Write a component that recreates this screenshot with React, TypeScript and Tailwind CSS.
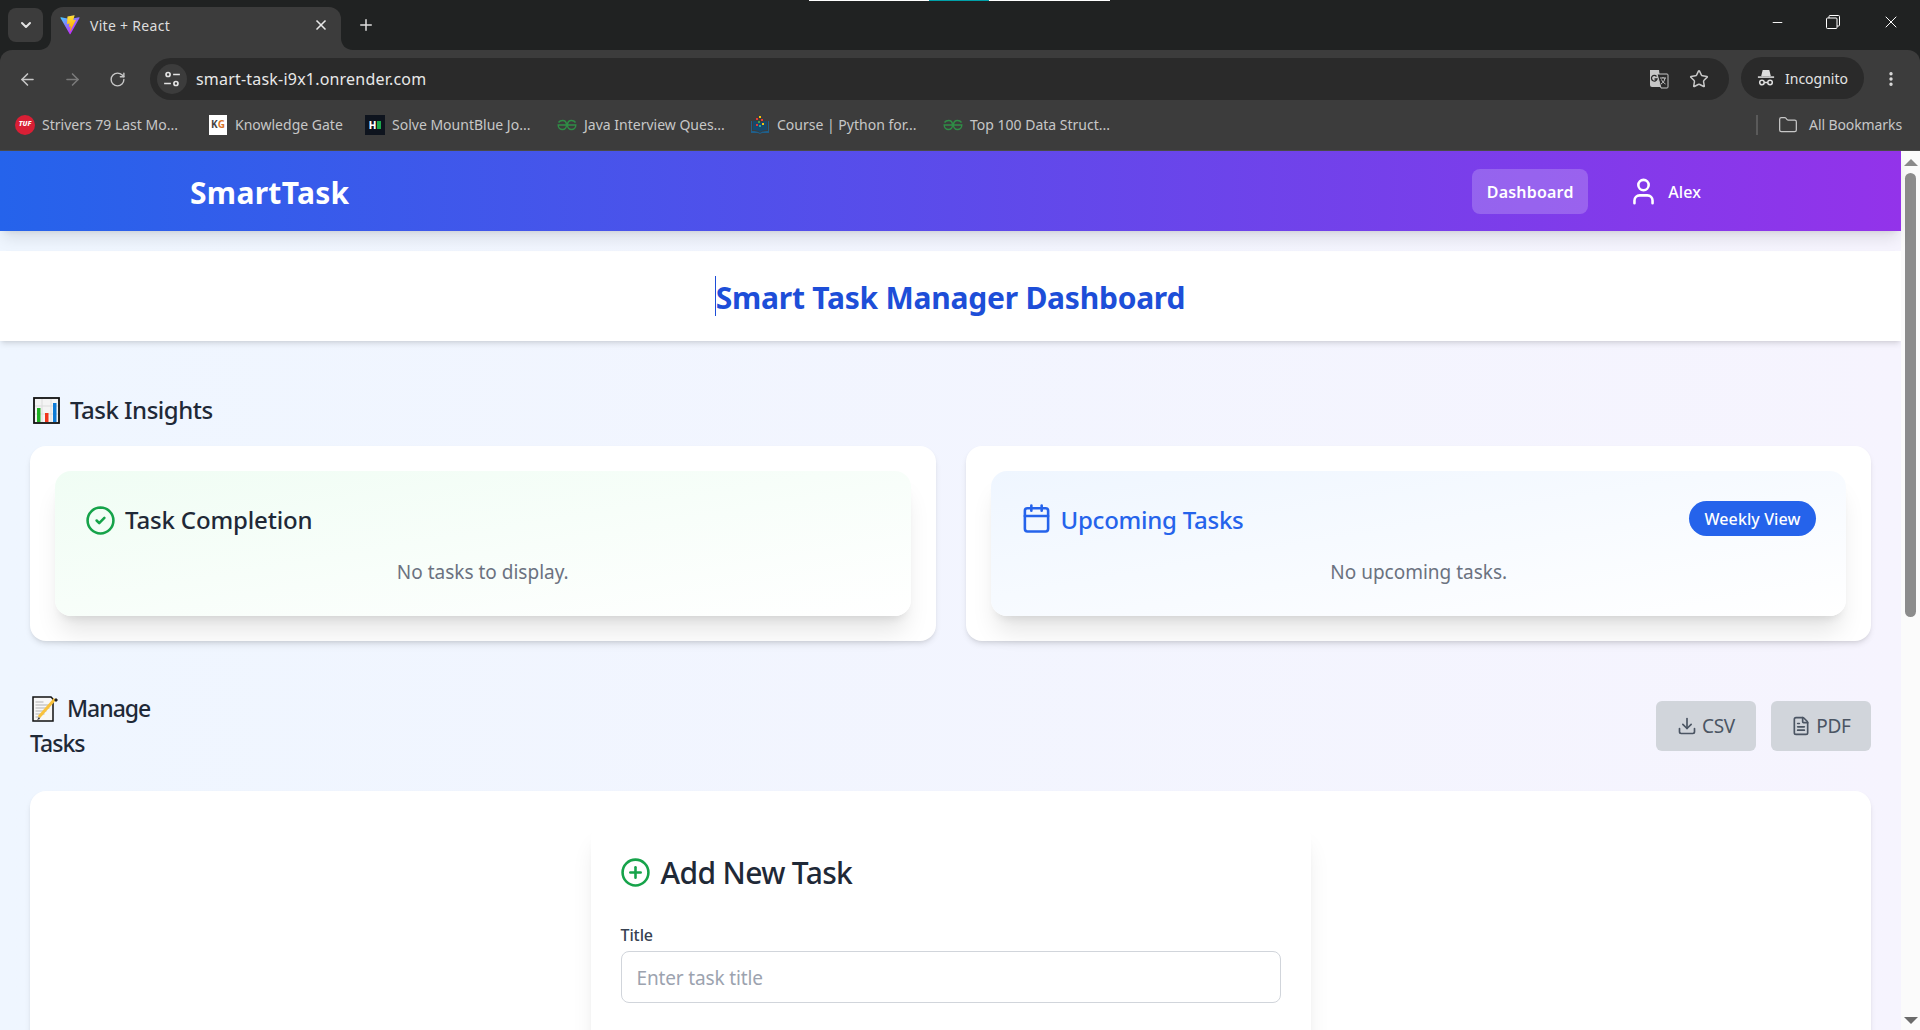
import { ArrowLeft, ArrowRight, Calendar, ChevronDown, CircleCheck, CirclePlus, Download, EllipsisVertical, FileText, Folder, Minus, Plus, RotateCw, Star, User, X } from "lucide-react";

function ViteLogo() {
  return (
    <svg viewBox="0 0 410 404" className="h-5 w-5" fill="none">
      <defs>
        <linearGradient id="viteA" x1="6" y1="33" x2="235" y2="344" gradientUnits="userSpaceOnUse">
          <stop stopColor="#41D1FF" />
          <stop offset="1" stopColor="#BD34FE" />
        </linearGradient>
        <linearGradient id="viteB" x1="194" y1="8" x2="236" y2="293" gradientUnits="userSpaceOnUse">
          <stop stopColor="#FFEA83" />
          <stop offset="0.08" stopColor="#FFDD35" />
          <stop offset="1" stopColor="#FFA800" />
        </linearGradient>
      </defs>
      <path d="M399.641 59.5246L215.643 388.545C211.844 395.338 202.084 395.378 198.228 388.618L10.5817 59.5563C6.38087 52.1896 12.6802 43.2665 21.0281 44.7586L205.223 77.6824C206.398 77.8924 207.601 77.8904 208.776 77.6763L389.119 44.8058C397.439 43.2894 403.768 52.1434 399.641 59.5246Z" fill="url(#viteA)" />
      <path d="M292.965 1.5744L156.801 28.2552C154.563 28.6937 152.906 30.5903 152.771 32.8664L144.395 174.33C144.198 177.662 147.258 180.248 150.51 179.498L188.42 170.749C191.967 169.931 195.172 173.055 194.443 176.622L183.18 231.775C182.422 235.487 185.907 238.661 189.532 237.56L212.947 230.446C216.577 229.344 220.065 232.527 219.297 236.242L201.398 322.875C200.278 328.294 207.486 331.249 210.492 326.603L212.5 323.5L323.454 102.072C325.312 98.3645 322.108 94.137 318.036 94.9228L279.014 102.454C275.347 103.161 272.227 99.746 273.262 96.1583L298.731 7.86689C299.767 4.27314 296.636 0.855181 292.965 1.5744Z" fill="url(#viteB)" />
    </svg>
  );
}

function GfgIcon() {
  return (
    <svg viewBox="0 0 20 12" className="h-3 w-5" fill="none" stroke="#2f8d46" strokeWidth="1.4">
      <path d="M1.500 3.500C2.500 2 4 1.500 5.500 1.500C8 1.500 9.500 3.500 9.500 6C9.500 8.500 8 10.500 5.500 10.500C3 10.500 1.200 8.500 1.200 6H9.500" />
      <path d="M18.500 3.500C17.500 2 16 1.500 14.500 1.500C12 1.500 10.500 3.500 10.500 6C10.500 8.500 12 10.500 14.500 10.500C17 10.500 18.800 8.500 18.800 6H10.500" />
    </svg>
  );
}

function CourseIcon() {
  return (
    <svg viewBox="0 0 20 20" className="h-5 w-5">
      <path d="M1 6l1 0v10c3 0 6 .4 8 2 2-1.600 5-2 8-2V6h1v12h-7l-2 1-2-1H1z" fill="#1f5f8b" />
      <path d="M3 6c2.500 0 5 .5 7 2 2-1.500 4.500-2 7-2v9c-2.500 0-5 .5-7 2-2-1.500-4.500-2-7-2z" fill="#17496c" />
      <rect x="9" y="1" width="2" height="2" fill="#f4c20d" />
      <rect x="6" y="3" width="2" height="2" fill="#e53935" />
      <rect x="11" y="4" width="2" height="2" fill="#e53935" />
      <rect x="8" y="6" width="2" height="2" fill="#43a047" />
      <rect x="12" y="8" width="2" height="2" fill="#f4c20d" />
      <rect x="6" y="9" width="2" height="2" fill="#e53935" />
      <rect x="9" y="10" width="2" height="2" fill="#26a69a" />
    </svg>
  );
}

function Bookmark({ w, icon, label }: { w: string; icon: React.ReactNode; label: string }) {
  return (
    <div className={`flex items-center ${w}`}>
      <div className="flex w-5 shrink-0 justify-center">{icon}</div>
      <span className="ml-[7px] whitespace-nowrap text-[14px] text-[#c7c7c7]">{label}</span>
    </div>
  );
}

function ChromeBar() {
  return (
    <div className="relative shrink-0 bg-[#202222]">
      <div className="absolute left-[809px] top-0 h-px w-[301px] bg-white" />
      <div className="absolute left-[929px] top-0 h-px w-[60px] bg-[#00a0a8]" />

      {/* tab strip */}
      <div className="flex h-[50px] items-end pl-2">
        <div className="mb-2 flex h-[34px] w-[35px] items-center justify-center rounded-lg bg-[#3c3c3c]">
          <ChevronDown className="h-4 w-4 text-[#e3e3e3]" strokeWidth={3} />
        </div>
        <div className="relative ml-2 flex h-[43px] w-[290px] items-center rounded-t-xl bg-[#3c3c3c] pb-[7px] pl-[9px] pr-[12px]">
          <svg className="absolute -left-3 bottom-0 h-3 w-3" viewBox="0 0 12 12"><path d="M0 12C7 12 12 7 12 0V12Z" fill="#3c3c3c" /></svg>
          <svg className="absolute -right-3 bottom-0 h-3 w-3" viewBox="0 0 12 12"><path d="M12 12C5 12 0 7 0 0V12Z" fill="#3c3c3c" /></svg>
          <ViteLogo />
          <span className="ml-[10px] text-[14px] tracking-[0.3px] text-[#dedede]">Vite + React</span>
          <X className="ml-auto h-4 w-4 text-[#e8e8e8]" strokeWidth={2.5} />
        </div>
        <Plus className="mb-[16px] ml-[16px] h-[18px] w-[18px] text-[#dedede]" strokeWidth={2} />
        <div className="mb-[18px] ml-auto flex items-center gap-[41px] pr-[19px] text-white">
          <Minus className="h-[15px] w-[15px]" strokeWidth={1.5} />
          <svg viewBox="0 0 14 14" className="h-[14px] w-[14px]" fill="none" stroke="currentColor"><rect x="0.5" y="3" width="10.500" height="10.500" rx="1" /><path d="M3 3V1.500a1 1 0 0 1 1-1h8.500a1 1 0 0 1 1 1V10a1 1 0 0 1-1 1H11" /></svg>
          <X className="h-[20px] w-[20px]" strokeWidth={1.2} />
        </div>
      </div>

      {/* toolbar */}
      <div className="flex h-[50px] items-end rounded-t-xl bg-[#3c3c3c] pb-0 pl-[18px] pr-[20px]">
        <div className="mb-[11px] flex w-[132px] items-center">
          <ArrowLeft className="h-[19px] w-[19px] text-[#c7c7c7]" />
          <ArrowRight className="ml-[26px] h-[19px] w-[19px] text-[#7a7a7a]" />
          <RotateCw className="ml-[27px] h-[17px] w-[17px] text-[#c7c7c7]" />
        </div>
        <div className="flex h-[42px] w-[1579px] items-center rounded-full bg-[#2a2a2a] pl-[7px] pr-[20px]">
          <div className="flex h-[30px] w-[30px] items-center justify-center rounded-full bg-[#3c3c3c]">
            <svg viewBox="0 0 16 16" className="h-[18px] w-[18px]" fill="none" stroke="#e3e3e3" strokeWidth="1.500"><circle cx="4.500" cy="4" r="1.800" /><path d="M9 4h6M1 12h6" /><circle cx="11.500" cy="12" r="1.800" /></svg>
          </div>
          <span className="ml-[9px] text-[16px] tracking-[0.2px] text-[#e8e8e8]">smart-task-i9x1.onrender.com</span>
          <div className="ml-auto flex items-center gap-[20px]">
            <svg viewBox="0 0 20 20" className="h-5 w-5"><path d="M1 1h9l2 17H3a2 2 0 0 1-2-2z" fill="#c7c7c7" /><path d="M8 5h10a1 1 0 0 1 1 1v12a1 1 0 0 1-1 1h-6z" fill="#2a2a2a" stroke="#c7c7c7" /><path d="M7.500 7.500a2.800 2.800 0 1 0 .5 2.500H5.500" fill="none" stroke="#2a2a2a" strokeWidth="1.300" /><path d="M11 9h6M14 8v1M16 9c-.5 3-2 5-4 6M12.500 10.500c.8 2 2.200 3.500 4 4.500" fill="none" stroke="#c7c7c7" /></svg>
            <Star className="h-[20px] w-[20px] text-[#c7c7c7]" strokeWidth={1.800} />
          </div>
        </div>
        <div className="mb-px ml-3 flex h-[42px] w-[123px] items-center rounded-full bg-[#2a2a2a] pl-4">
          <svg viewBox="0 0 20 20" className="h-[18px] w-[18px]" fill="none" stroke="#dedede" strokeWidth="1.700"><path d="M5.500 8l1.500-6h6l1.500 6" fill="#dedede" /><path d="M1 9h18" /><circle cx="5.500" cy="15" r="2.500" /><circle cx="14.500" cy="15" r="2.500" /><path d="M8 15h4" /></svg>
          <span className="ml-[10px] text-[14px] text-[#e3e3e3]">Incognito</span>
        </div>
        <EllipsisVertical className="mb-[12px] ml-[18px] h-[18px] w-[18px] text-[#dedede]" strokeWidth={2.500} />
      </div>

      {/* bookmarks */}
      <div className="flex h-[51px] items-center border-b border-[#4a4a4a] bg-[#3c3c3c] pb-px pl-[15px] pr-[18px]">
        <Bookmark
          w="w-[193px]"
          icon={<div className="flex h-5 w-5 items-center justify-center rounded-full bg-[#d91f35] text-[7px] font-extrabold italic text-white">TUF</div>}
          label="Strivers 79 Last Mo..."
        />
        <Bookmark
          w="w-[157px]"
          icon={<div className="flex h-5 w-[18px] items-center justify-center bg-white text-[10px] font-bold"><span className="text-[#444]">K</span><span className="text-[#d9742b]">G</span></div>}
          label="Knowledge Gate"
        />
        <Bookmark
          w="w-[192px]"
          icon={<div className="flex h-5 w-5 items-center justify-center gap-px bg-[#0e141e]"><span className="text-[10px] font-extrabold leading-none text-white">H</span><span className="h-2 w-[4px] bg-[#1ba94c]" /></div>}
          label="Solve MountBlue Jo..."
        />
        <Bookmark w="w-[193px]" icon={<GfgIcon />} label="Java Interview Ques..." />
        <Bookmark w="w-[193px]" icon={<CourseIcon />} label="Course | Python for..." />
        <Bookmark w="w-[120px]" icon={<GfgIcon />} label="Top 100 Data Struct..." />
        <div className="ml-auto h-5 w-0.5 bg-[#5a5a5a]" />
        <Folder className="ml-[20px] h-[20px] w-[20px] text-[#c7c7c7]" strokeWidth={1.500} />
        <span className="ml-[11px] text-[14px] tracking-[-0.1px] text-[#c7c7c7]">All Bookmarks</span>
      </div>
    </div>
  );
}

function BarChartEmoji() {
  return (
    <svg viewBox="0 0 27 27" className="h-[27px] w-[27px] shrink-0">
      <rect x="1" y="1" width="25" height="25" fill="#f4f4f4" stroke="#111" strokeWidth="1.800" />
      <path d="M9 2v23M18 2v23M2 9h23M2 17h23" stroke="#dcdcdc" strokeWidth="1" />
      <rect x="4" y="11" width="3.500" height="14" fill="#1fb024" />
      <rect x="12" y="16" width="3.500" height="9" fill="#f0351c" />
      <rect x="20" y="6" width="3.500" height="19" fill="#0d7ad6" />
    </svg>
  );
}

function MemoEmoji() {
  return (
    <svg viewBox="0 0 27 26" className="h-[26px] w-[27px] shrink-0">
      <path d="M1 1h18l2 2v22H1z" fill="#f7f7f7" stroke="#111" strokeWidth="1.500" />
      <path d="M3.500 6h8M3.500 9h14M3.500 12h14M3.500 15h11M3.500 18h9M3.500 21h5" stroke="#c9c9c9" strokeWidth="1.300" />
      <path d="M7 21l16-18" stroke="#f9c23c" strokeWidth="3" />
      <path d="M22 4l2-2 2 2-2 2z" fill="#222" />
      <path d="M7 21l-2 3 3-1z" fill="#333" />
    </svg>
  );
}

export default function App() {
  return (
    <div className="flex h-[1030px] w-[1920px] flex-col overflow-hidden font-['Noto_Sans',sans-serif]">
      <ChromeBar />
      <div className="flex min-h-0 flex-1">
        <div className="min-w-0 flex-1 bg-linear-to-r/srgb from-[#eff6ff] to-[#f6f4fe]">
          {/* navbar */}
          <header className="relative flex h-[80px] items-center bg-linear-to-r/srgb from-[#2563eb] to-[#9333ea] pl-[190px] pr-[200px] text-white shadow-lg">
            <span className="pt-[2px] text-[30px] font-bold tracking-[0.3px]">SmartTask</span>
            <div className="ml-auto flex h-[45px] w-[116px] items-center justify-center rounded-lg bg-white/20 pt-[2px] text-[16px] font-semibold tracking-[0.2px]">Dashboard</div>
            <User className="ml-[40px] h-[31px] w-[31px]" strokeWidth={2} />
            <span className="ml-[9px] pt-[2px] text-[16px] font-medium tracking-[0.1px]">Alex</span>
          </header>

          {/* page title */}
          <div className="mt-5 flex h-[90px] items-center justify-center bg-white shadow-md">
            <h1 className="relative pt-[2px] text-[30px] font-bold tracking-[-0.24px] text-[#1d4ed8]">
              <span className="absolute -left-px top-[3px] h-10 w-px bg-[#1d4ed8]" />
              Smart Task Manager Dashboard
            </h1>
          </div>

          <main className="px-[30px]">
            {/* insights */}
            <h2 className="mt-[52px] flex h-[34px] items-center gap-[10px] pl-[3px] text-[24px] font-medium tracking-[-0.5px] text-[#1f2937]">
              <BarChartEmoji />
              Task Insights
            </h2>
            <div className="mt-[19px] grid grid-cols-2 gap-[30px]">
              <div className="h-[195px] rounded-2xl bg-white p-[25px] shadow-md">
                <div className="h-[145px] rounded-2xl bg-linear-to-br/srgb from-[#f0fdf4] to-white px-[31px] pt-[33px] shadow-xl">
                  <div className="-ml-px flex h-[32px] items-center gap-[9px] text-[24px] font-medium tracking-[-0.15px] text-[#1f2937]">
                    <CircleCheck className="h-[31px] w-[31px] text-[#16a34a]" strokeWidth={2} />
                    Task Completion
                  </div>
                  <p className="mt-[22px] text-center text-[19px] leading-[28px] text-[#6b7280]">No tasks to display.</p>
                </div>
              </div>
              <div className="h-[195px] rounded-2xl bg-white p-[25px] shadow-md">
                <div className="h-[145px] rounded-2xl bg-linear-to-br/srgb from-[#eff6ff] to-white pl-[31px] pr-[30px] pt-[30px] shadow-xl">
                  <div className="-ml-px flex h-[35px] items-center">
                    <Calendar className="h-[31px] w-[31px] text-[#2563eb]" strokeWidth={2} />
                    <span className="ml-[9px] pt-[2px] text-[24px] font-medium tracking-[-0.25px] text-[#2563eb]">Upcoming Tasks</span>
                    <span className="ml-auto flex h-[35px] w-[127px] items-center justify-center rounded-full bg-[#2563eb] text-[16px] font-medium tracking-[0.1px] text-white">Weekly View</span>
                  </div>
                  <p className="mt-[22px] text-center text-[19px] leading-[28px] text-[#6b7280]">No upcoming tasks.</p>
                </div>
              </div>
            </div>

            {/* manage */}
            <div className="mt-[50px] flex items-start justify-between">
              <h2 className="flex w-[140px] flex-col text-[23px] font-medium tracking-[-1px] text-[#1f2937]">
                <span className="flex h-[35px] items-center gap-[8px] pl-[2px]"><MemoEmoji />Manage</span>
                <span className="flex h-[35px] items-center">Tasks</span>
              </h2>
              <div className="mt-[10px] flex gap-[15px]">
                <button className="flex h-[50px] w-[100px] items-center justify-center gap-[5px] rounded-md bg-[#d1d5db] text-[19px] tracking-[-0.3px] text-[#4b5563]">
                  <Download className="h-[20px] w-[20px]" />CSV
                </button>
                <button className="flex h-[50px] w-[100px] items-center justify-center gap-[5px] rounded-md bg-[#d1d5db] text-[19px] tracking-[-0.3px] text-[#4b5563]">
                  <FileText className="h-[20px] w-[20px]" />PDF
                </button>
              </div>
            </div>

            <section className="mt-[30px] flex h-[300px] justify-center rounded-2xl bg-white pt-[31px] shadow-md">
              <div className="h-[300px] w-[720px] rounded-2xl bg-white px-[30px] pt-[35px] shadow-xl">
                <div className="-ml-px flex h-[30px] items-center gap-[10px] text-[30px] font-medium tracking-[-0.65px] text-[#1f2937]">
                  <CirclePlus className="h-[31px] w-[31px] text-[#16a34a]" strokeWidth={2} />
                  Add New Task
                </div>
                <label className="mt-[36px] block text-[16px] font-medium leading-[24px] tracking-[-0.1px] text-[#374151]">Title</label>
                <input
                  className="mt-[4px] h-[52px] w-[660px] rounded-lg border border-[#d1d5db] px-[15px] pt-px text-[19px] tracking-[-0.15px] placeholder:text-[#9ca3af]"
                  placeholder="Enter task title"
                />
              </div>
            </section>
          </main>
        </div>

        {/* scrollbar */}
        <div className="flex w-[19px] shrink-0 flex-col items-center bg-[#fbfbfb]">
          <div className="mt-[8px] h-0 w-0 border-x-[7px] border-b-[7px] border-x-transparent border-b-[#8a8a8a]" />
          <div className="mt-[7px] h-[444px] w-[11px] rounded-full bg-[#8c8c8c]" />
          <div className="mt-auto mb-[6px] h-0 w-0 border-x-[7px] border-t-[7px] border-x-transparent border-t-[#6b6b6b]" />
        </div>
      </div>
    </div>
  );
}
